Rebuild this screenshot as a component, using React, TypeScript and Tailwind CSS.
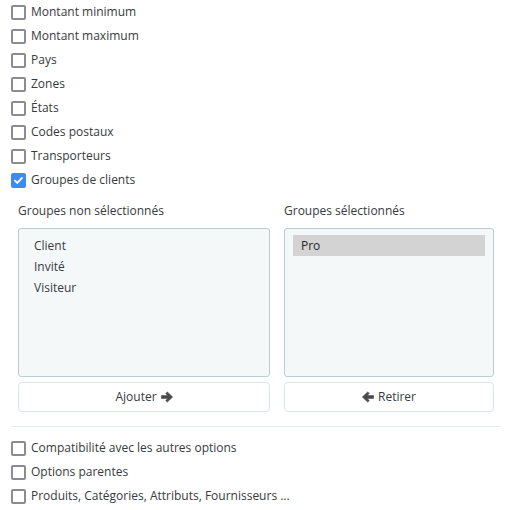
import React from "react";

function Box({ checked }: { checked?: boolean }) {
  if (checked) {
    return (
      <span className="flex h-[15px] w-[15px] items-center justify-center rounded-[2px] bg-[#3a8bf4]">
        <svg viewBox="0 0 12 12" className="h-[11px] w-[11px]">
          <path d="M2.2 6.2 L4.8 8.7 L9.8 3.2" fill="none" stroke="#fff" strokeWidth="2" strokeLinecap="round" strokeLinejoin="round" />
        </svg>
      </span>
    );
  }
  return <span className="block h-[15px] w-[15px] rounded-[2px] border-2 border-[#8b8a95] bg-white" />;
}

function Arrow({ left }: { left?: boolean }) {
  return (
    <svg viewBox="0 0 12 12" className="h-[12px] w-[12px]" style={left ? { transform: "scaleX(-1)" } : undefined}>
      <path
        d="M6.3 0.9 L11.6 6 L6.3 11.1 L4.7 9.5 L6.9 7.4 H0.4 V4.6 H6.9 L4.7 2.5 Z"
        fill="#4a4a4a"
        stroke="#4a4a4a"
        strokeWidth="0.6"
        strokeLinejoin="round"
      />
    </svg>
  );
}

function Row({ label, checked }: { label: string; checked?: boolean }) {
  return (
    <div className="flex h-6 items-center gap-[5px] pl-[11px]">
      <Box checked={checked} />
      <span>{label}</span>
    </div>
  );
}

export default function App() {
  const top = [
    "Montant minimum",
    "Montant maximum",
    "Pays",
    "Zones",
    "États",
    "Codes postaux",
    "Transporteurs",
  ];
  return (
    <div
      className="h-[510px] w-[513px] bg-white text-[12px] leading-[18px] text-[#363a41]"
      style={{ fontFamily: '"Open Sans", "Noto Sans", sans-serif' }}
    >
      <div>
        {top.map((t) => (
          <Row key={t} label={t} />
        ))}
        <Row label="Groupes de clients" checked />
      </div>
      <div className="mt-[10px] flex gap-[14px] pl-[18px]">
        <div className="flex w-[252px] flex-col">
          <div className="mb-2 h-[18px]">Groupes non sélectionnés</div>
          <div className="h-[149px] rounded-[3px] border border-[#bbcdd2] bg-[#f5f8f9] px-[15px] pt-[6px]">
            <div className="flex h-[21px] items-center">Client</div>
            <div className="flex h-[21px] items-center">Invité</div>
            <div className="flex h-[21px] items-center">Visiteur</div>
          </div>
          <button className="mt-[5px] flex h-[30px] items-center justify-center gap-[4px] rounded-[4px] border border-[#dbe6e9] bg-white text-[#363a41]">
            <span>Ajouter</span>
            <Arrow />
          </button>
        </div>
        <div className="flex w-[210px] flex-col">
          <div className="mb-2 h-[18px]">Groupes sélectionnés</div>
          <div className="h-[149px] rounded-[3px] border border-[#bbcdd2] bg-[#f5f8f9] px-[8px] pt-[6px]">
            <div className="flex h-[21px] items-center bg-[#d3d3d3] px-[8px] text-[#25272b]">Pro</div>
          </div>
          <button className="mt-[5px] flex h-[30px] items-center justify-center gap-[4px] rounded-[4px] border border-[#dbe6e9] bg-white text-[#363a41]">
            <Arrow left />
            <span>Retirer</span>
          </button>
        </div>
      </div>
      <div className="ml-[11px] mt-[14px] h-px w-[490px] bg-[#e7ecee]" />
      <div className="mt-[9px]">
        <Row label="Compatibilité avec les autres options" />
        <Row label="Options parentes" />
        <Row label="Produits, Catégories, Attributs, Fournisseurs ..." />
      </div>
    </div>
  );
}
